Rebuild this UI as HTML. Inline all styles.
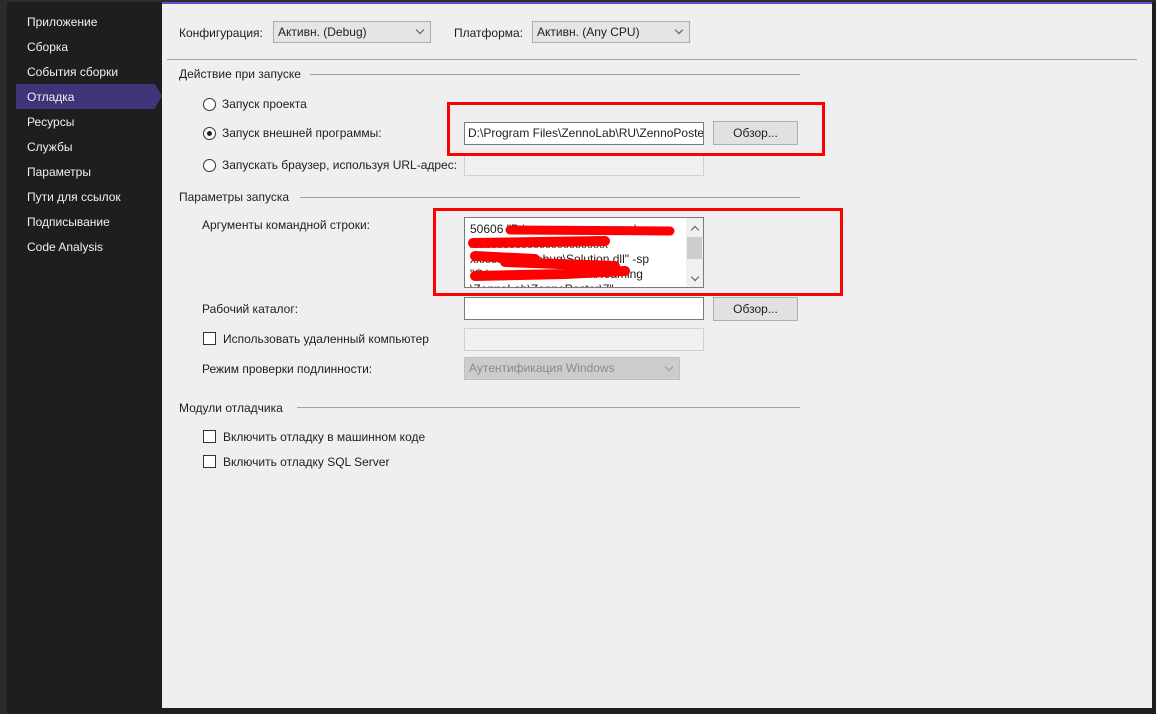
<!DOCTYPE html>
<html><head><meta charset="utf-8"><style>
*{margin:0;padding:0;box-sizing:border-box}
body{width:1156px;height:714px;background:#1e1e1e;position:relative;overflow:hidden;font-family:"Liberation Sans","DejaVu Sans",sans-serif;font-size:12px;color:#1e1e1e}
.a{position:absolute;white-space:nowrap}
.side{color:#f1f1f1;left:27px;font-size:12px}
.main{position:absolute;left:162px;top:4px;width:990px;height:704px;background:#efefef}
.t{position:absolute;white-space:nowrap;line-height:14px}
.box{position:absolute;background:#fff;border:1px solid #7a7a7a}
.dis{position:absolute;background:#f0f0f0;border:1px solid #d0d0d0}
.btn{position:absolute;background:#e1e1e1;border:1px solid #adadad;text-align:center;line-height:22px}
.sel{position:absolute;background:#e5e5e5;border:1px solid #acacac;line-height:20px;padding-left:4px;white-space:nowrap}
.line{position:absolute;height:1px;background:#a0a0a0}
.rad{position:absolute;width:13px;height:13px;border:1px solid #333;border-radius:50%;background:#fff}
.chk{position:absolute;width:13px;height:13px;border:1px solid #333;background:#fff}
.red{position:absolute;border:3px solid #f00}
.chev{position:absolute;width:6px;height:6px;border-right:1px solid #555;border-bottom:1px solid #555;transform:rotate(45deg)}
</style></head><body>
<div class="a" style="left:0;top:0;width:1156px;height:2px;background:#2d2d30"></div>
<div class="a" style="left:162px;top:2px;width:990px;height:3px;background:#5a4fcf"></div>
<div class="a" style="left:0;top:0;width:7px;height:714px;background:#2b2b2b"></div>
<div class="a" style="left:16px;top:84px;width:139px;height:25px;background:#3f3477"></div>
<div class="a" style="left:155px;top:84px;width:0;height:0;border-top:12.5px solid transparent;border-bottom:12.5px solid transparent;border-left:7px solid #3f3477"></div>
<div class="a side" style="top:15px">Приложение</div>
<div class="a side" style="top:40px">Сборка</div>
<div class="a side" style="top:65px">События сборки</div>
<div class="a side" style="top:90px">Отладка</div>
<div class="a side" style="top:115px">Ресурсы</div>
<div class="a side" style="top:140px">Службы</div>
<div class="a side" style="top:165px">Параметры</div>
<div class="a side" style="top:190px">Пути для ссылок</div>
<div class="a side" style="top:215px">Подписывание</div>
<div class="a side" style="top:240px">Code Analysis</div>

<div class="main">
<div class="t" style="left:17px;top:22px">Конфигурация:</div>
<div class="sel" style="left:111px;top:17px;width:158px;height:22px">Активн. (Debug)</div>
<div class="chev" style="left:255px;top:23px"></div>
<div class="t" style="left:292px;top:22px">Платформа:</div>
<div class="sel" style="left:370px;top:17px;width:158px;height:22px">Активн. (Any CPU)</div>
<div class="chev" style="left:514px;top:23px"></div>
<div class="line" style="left:5px;top:55px;width:970px"></div>

<div class="t" style="left:17px;top:63px">Действие при запуске</div>
<div class="line" style="left:148px;top:70px;width:490px"></div>
<div class="rad" style="left:41px;top:94px"></div>
<div class="t" style="left:60px;top:93px">Запуск проекта</div>
<div class="rad" style="left:41px;top:123px"></div>
<div class="a" style="left:45px;top:127px;width:5px;height:5px;border-radius:50%;background:#222"></div>
<div class="t" style="left:60px;top:122px">Запуск внешней программы:</div>
<div class="rad" style="left:41px;top:155px"></div>
<div class="t" style="left:60px;top:154px">Запускать браузер, используя URL-адрес:</div>
<div class="box" style="left:302px;top:118px;width:240px;height:23px;padding-left:3px;line-height:21px;overflow:hidden;white-space:nowrap">D:\Program&nbsp;Files\ZennoLab\RU\ZennoPoster</div>
<div class="btn" style="left:551px;top:117px;width:85px;height:24px">Обзор...</div>
<div class="dis" style="left:302px;top:149px;width:240px;height:23px"></div>
<div class="red" style="left:285px;top:98px;width:378px;height:54px"></div>

<div class="t" style="left:17px;top:186px">Параметры запуска</div>
<div class="line" style="left:138px;top:193px;width:500px"></div>
<div class="t" style="left:40px;top:214px">Аргументы командной строки:</div>
<div class="box" style="left:302px;top:213px;width:240px;height:71px;overflow:hidden">
<div style="position:absolute;left:5px;top:4px;line-height:15px;width:215px;white-space:nowrap">50606 "D:\xxxxxxxxxxxxxxxxxx\xxx<br>xxxxxxxxxxxxxxxxxxxxxxx<br>xxxxxxxxx\Debug\Solution.dll" -sp<br>"C:\xxxxxxxxxxxxxxxxx\Roaming<br>\ZennoLab\ZennoPoster\7"</div>
<div style="position:absolute;left:221px;top:0;width:17px;height:69px;background:#f0f0f0"></div>
<div style="position:absolute;left:222px;top:19px;width:15px;height:22px;background:#cdcdcd"></div>
<div class="chev" style="left:227px;top:9px;transform:rotate(-135deg)"></div>
<div class="chev" style="left:227px;top:56px"></div>
<svg style="position:absolute;left:0;top:0" width="220" height="71"><g stroke="#f00" stroke-linecap="round" fill="none">
<path d="M45 12 L205 13" stroke-width="9"/><path d="M8 25 L140 23" stroke-width="10"/><path d="M10 38 L70 41 M40 44 L150 48" stroke-width="10"/><path d="M10 58 L100 56 L160 53" stroke-width="10"/>
</g></svg>
</div>
<div class="red" style="left:271px;top:204px;width:410px;height:88px"></div>

<div class="t" style="left:40px;top:298px">Рабочий каталог:</div>
<div class="box" style="left:302px;top:293px;width:240px;height:23px"></div>
<div class="btn" style="left:551px;top:293px;width:85px;height:24px">Обзор...</div>
<div class="chk" style="left:41px;top:328px"></div>
<div class="t" style="left:61px;top:328px">Использовать удаленный компьютер</div>
<div class="dis" style="left:302px;top:324px;width:240px;height:23px"></div>
<div class="t" style="left:40px;top:358px">Режим проверки подлинности:</div>
<div class="sel" style="left:302px;top:353px;width:216px;height:23px;background:#cccccc;border-color:#bfbfbf;color:#8a8a8a">Аутентификация Windows</div>
<div class="chev" style="left:504px;top:360px;border-color:#999"></div>

<div class="t" style="left:17px;top:397px">Модули отладчика</div>
<div class="line" style="left:135px;top:403px;width:503px"></div>
<div class="chk" style="left:41px;top:426px"></div>
<div class="t" style="left:61px;top:426px">Включить отладку в машинном коде</div>
<div class="chk" style="left:41px;top:451px"></div>
<div class="t" style="left:61px;top:451px">Включить отладку SQL Server</div>
</div>
</body></html>
